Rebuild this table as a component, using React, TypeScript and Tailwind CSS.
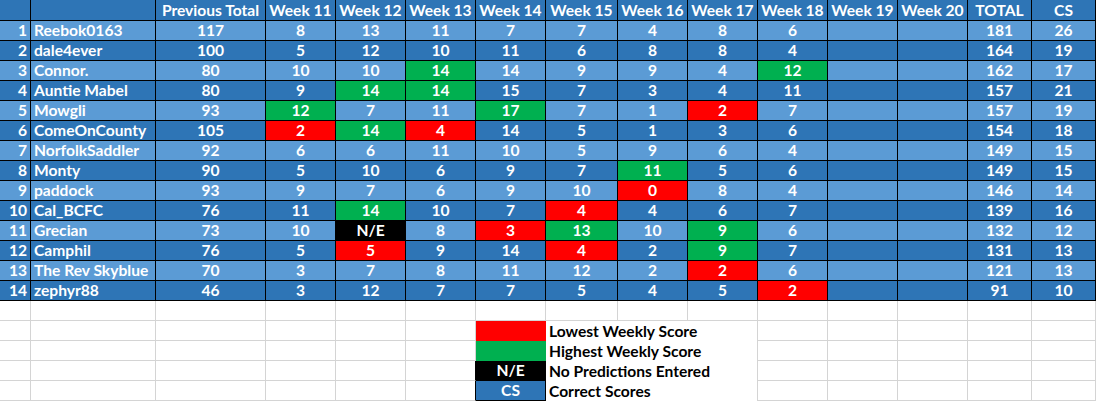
type Mark = "g" | "r" | "n" | "";

const widths = [
  "w-[31px]",
  "w-[125px]",
  "w-[110px]",
  "w-[70px]",
  "w-[70px]",
  "w-[70px]",
  "w-[70px]",
  "w-[72px]",
  "w-[70px]",
  "w-[70px]",
  "w-[70px]",
  "w-[70px]",
  "w-[70px]",
  "w-[64px]",
  "w-[64px]",
];

const headers = [
  "",
  "",
  "Previous Total",
  "Week 11",
  "Week 12",
  "Week 13",
  "Week 14",
  "Week 15",
  "Week 16",
  "Week 17",
  "Week 18",
  "Week 19",
  "Week 20",
  "TOTAL",
  "CS",
];

// weekly scores; suffix g = highest, r = lowest, n = no predictions
const rows: [string, number, string[], number, number][] = [
  ["Reebok0163", 117, ["8", "13", "11", "7", "7", "4", "8", "6"], 181, 26],
  ["dale4ever", 100, ["5", "12", "10", "11", "6", "8", "8", "4"], 164, 19],
  ["Connor.", 80, ["10", "10", "14g", "14", "9", "9", "4", "12g"], 162, 17],
  ["Auntie Mabel", 80, ["9", "14g", "14g", "15", "7", "3", "4", "11"], 157, 21],
  ["Mowgli", 93, ["12g", "7", "11", "17g", "7", "1", "2r", "7"], 157, 19],
  ["ComeOnCounty", 105, ["2r", "14g", "4r", "14", "5", "1", "3", "6"], 154, 18],
  ["NorfolkSaddler", 92, ["6", "6", "11", "10", "5", "9", "6", "4"], 149, 15],
  ["Monty", 90, ["5", "10", "6", "9", "7", "11g", "5", "6"], 149, 15],
  ["paddock", 93, ["9", "7", "6", "9", "10", "0r", "8", "4"], 146, 14],
  ["Cal_BCFC", 76, ["11", "14g", "10", "7", "4r", "4", "6", "7"], 139, 16],
  ["Grecian", 73, ["10", "N/En", "8", "3r", "13g", "10", "9g", "6"], 132, 12],
  ["Camphil", 76, ["5", "5r", "9", "14", "4r", "2", "9g", "7"], 131, 13],
  ["The Rev Skyblue", 70, ["3", "7", "8", "11", "12", "2", "2r", "6"], 121, 13],
  ["zephyr88", 46, ["3", "12", "7", "7", "5", "4", "5", "2r"], 91, 10],
];

const markBg: Record<Mark, string> = {
  g: "bg-[#00b050]",
  r: "bg-[#ff0000]",
  n: "bg-black",
  "": "",
};

function parse(v: string): [string, Mark] {
  const last = v.slice(-1);
  if (last === "g" || last === "r" || last === "n") return [v.slice(0, -1), last];
  return [v, ""];
}

const legend = [
  { bg: "bg-[#ff0000] border-[#ff0000]", label: "Lowest Weekly Score", text: "", dark: false },
  { bg: "bg-[#00b050] border-[#00b050]", label: "Highest Weekly Score", text: "", dark: false },
  { bg: "bg-black border-black", label: "No Predictions Entered", text: "N/E", dark: true },
  { bg: "bg-[#2e75b6] border-black", label: "Correct Scores", text: "CS", dark: true },
];

export default function App() {
  return (
    <div
      className="w-[1096px] h-[401px] bg-white overflow-hidden text-[15.6px] font-bold leading-none text-white"
      style={{ fontFamily: "Lato, 'Liberation Sans', sans-serif" }}
    >
      {/* header */}
      <div className="flex bg-[#2e75b6]">
        {headers.map((h, i) => (
          <div
            key={i}
            className={`${widths[i]} h-[21px] shrink-0 border-r border-b border-black flex items-center justify-center pt-[1px] whitespace-nowrap`}
          >
            {h}
          </div>
        ))}
      </div>

      {/* league rows */}
      {rows.map(([name, prev, weeks, total, cs], r) => {
        const rowBg = r % 2 === 0 ? "bg-[#5b9bd5]" : "bg-[#2e75b6]";
        const cells: [string, Mark][] = [
          [String(prev), ""],
          ...weeks.map(parse),
          ["", ""],
          ["", ""],
          [String(total), ""],
          [String(cs), ""],
        ];
        return (
          <div key={name} className={`flex ${rowBg}`}>
            <div className={`${widths[0]} h-[20px] shrink-0 border-r border-b border-black flex items-center justify-end pr-[3px] pt-[1px]`}>
              {r + 1}
            </div>
            <div className={`${widths[1]} h-[20px] shrink-0 border-r border-b border-black flex items-center pl-[3px] pt-[1px] whitespace-nowrap`}>
              {name}
            </div>
            {cells.map(([v, m], c) => (
              <div
                key={c}
                className={`${widths[c + 2]} h-[20px] shrink-0 border-r border-b border-black flex items-center justify-center pt-[1px] ${markBg[m]}`}
              >
                {v}
              </div>
            ))}
          </div>
        );
      })}

      {/* empty sheet row */}
      <div className="flex">
        {widths.map((w, i) => (
          <div key={i} className={`${w} h-[20px] shrink-0 border-r border-b border-[#d4d4d4]`} />
        ))}
      </div>

      {/* legend */}
      {legend.map((l, r) => (
        <div key={l.label} className="flex">
          {widths.slice(0, 6).map((w, i) => (
            <div
              key={i}
              className={`${w} h-[20px] shrink-0 border-b border-[#d4d4d4] border-r ${
                i === 5 && l.dark ? "border-r-black" : ""
              }`}
            />
          ))}
          <div
            className={`${widths[6]} h-[20px] shrink-0 border-r border-b ${l.bg} ${
              r === 2 ? "border-b-black" : ""
            } flex items-center justify-center pt-[1px] text-white`}
          >
            {l.text}
          </div>
          <div className="w-[212px] h-[20px] shrink-0 border-r border-[#d4d4d4] bg-white flex items-center pl-[3px] pt-[1px] text-black whitespace-nowrap">
            {l.label}
          </div>
          {widths.slice(10).map((w, i) => (
            <div key={i} className={`${w} h-[20px] shrink-0 border-r border-b border-[#d4d4d4]`} />
          ))}
        </div>
      ))}
    </div>
  );
}
